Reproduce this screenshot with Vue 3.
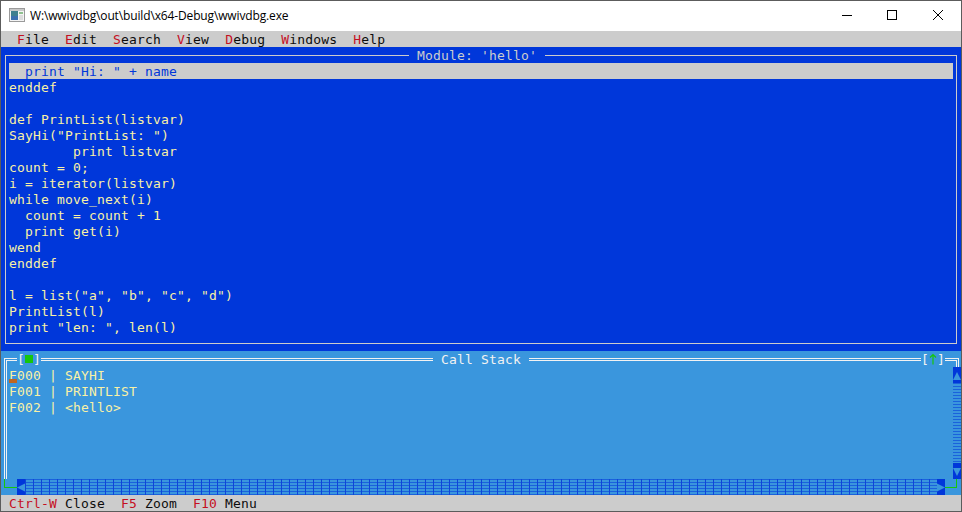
<script setup>
const menus = ['File', 'Edit', 'Search', 'View', 'Debug', 'Windows', 'Help']
const selected = '  print "Hi: " + name'
const code = [
  'enddef',
  '',
  'def PrintList(listvar)',
  'SayHi("PrintList: ")',
  '        print listvar',
  'count = 0;',
  'i = iterator(listvar)',
  'while move_next(i)',
  '  count = count + 1',
  '  print get(i)',
  'wend',
  'enddef',
  '',
  'l = list("a", "b", "c", "d")',
  'PrintList(l)',
  'print "len: ", len(l)'
]
const stack = ['F000 | SAYHI', 'F001 | PRINTLIST', 'F002 | <hello>']
const status = [
  ['Ctrl-W', 'Close'],
  ['F5', 'Zoom'],
  ['F10', 'Menu']
]
</script>

<template>
  <div class="window">
    <header class="titlebar">
      <svg class="appicon" width="16" height="16" viewBox="0 0 16 16">
        <rect x="0.5" y="1.5" width="15" height="13" fill="#f4f4f4" stroke="#9a9a9a" />
        <rect x="1" y="2" width="14" height="2" fill="#c8c8c8" />
        <rect x="2" y="4" width="7" height="9" fill="#3f7f8f" />
        <rect x="2" y="9" width="7" height="4" fill="#3c6fb0" />
        <rect x="10" y="5" width="4" height="2" fill="#8fc08f" />
        <rect x="10" y="8" width="4" height="5" fill="#dcdcdc" />
      </svg>
      <span class="path">W:\wwivdbg\out\build\x64-Debug\wwivdbg.exe</span>
      <div class="controls">
        <svg class="ctl" width="46" height="30" viewBox="0 0 46 30"><path d="M19 14.5h10" stroke="#000" fill="none" /></svg>
        <svg class="ctl" width="46" height="30" viewBox="0 0 46 30"><rect x="18.5" y="9.5" width="9" height="9" stroke="#000" fill="none" /></svg>
        <svg class="ctl" width="46" height="30" viewBox="0 0 46 30"><path d="M18 9l10 10M28 9l-10 10" stroke="#000" fill="none" /></svg>
      </div>
    </header>

    <nav class="menubar term">
      <span v-for="m in menus" :key="m" class="menu"><span class="hot">{{ m[0] }}</span>{{ m.slice(1) }}</span>
    </nav>

    <section class="codepane term">
      <div class="codeframe">
        <span class="codetitle">Module: 'hello'</span>
        <div class="line selected">{{ selected }}</div>
        <div v-for="(l, i) in code" :key="i" class="line">{{ l }}</div>
      </div>
    </section>

    <section class="stackpane term">
      <div class="stackframe">
        <span class="tag tag-left"><span class="cell">[</span><span class="cell"><i class="square"></i></span><span class="cell">]</span></span>
        <span class="stacktitle">Call Stack</span>
        <span class="tag tag-right">
          <span class="cell">[</span>
          <svg class="cell" width="8" height="16" viewBox="0 0 8 16"><path d="M4 3.5V13.5M1 6.5L4 3.5L7 6.5" stroke="#16c60c" stroke-width="1.2" fill="none" /></svg>
          <span class="cell">]</span>
        </span>
        <div v-for="s in stack" :key="s" class="line">{{ s }}</div>
        <span class="cursor"></span>
      </div>
      <div class="vbar">
        <span class="arrow"><svg width="8" height="16" viewBox="0 0 8 16"><path d="M4 5L8 13H0Z" fill="#3a96dd" /></svg></span>
        <span class="track"></span>
        <span class="arrow"><svg width="8" height="16" viewBox="0 0 8 16"><path d="M0 5H8L4 13Z" fill="#3a96dd" /></svg></span>
      </div>
      <div class="hbar">
        <span class="arrow"><svg width="8" height="16" viewBox="0 0 8 16"><path d="M0 8.5L8 4.5V12.5Z" fill="#3a96dd" /></svg></span>
        <span class="track"></span>
        <span class="arrow"><svg width="8" height="16" viewBox="0 0 8 16"><path d="M0 4.5L8 8.5L0 12.5Z" fill="#3a96dd" /></svg></span>
      </div>
      <span class="corner corner-left"></span>
      <span class="corner corner-right"></span>
    </section>

    <footer class="statusbar term">
      <span v-for="s in status" :key="s[0]" class="stat"><span class="hot">{{ s[0] }}</span>{{ ' ' + s[1] }}</span>
    </footer>
  </div>
</template>

<style>
html, body { margin: 0; padding: 0; background: #fff; overflow: hidden; }
</style>

<style scoped>
.window {
  width: 962px;
  height: 512px;
  box-sizing: border-box;
  border: 1px solid #5c5c5c;
  display: flex;
  flex-direction: column;
  overflow: hidden;
  background: #fff;
}
.titlebar {
  height: 30px;
  flex: none;
  display: flex;
  align-items: center;
  background: #fff;
  padding-left: 8px;
}
.appicon { flex: none; margin-top: -2px; }
.path {
  margin-left: 5px;
  margin-bottom: 2px;
  font-family: "Open Sans", sans-serif;
  font-size: 12px;
  letter-spacing: -0.14px;
  color: #000;
  white-space: nowrap;
}
.controls { margin-left: auto; display: flex; }
.ctl { display: block; }
.term {
  font-family: "DejaVu Sans Mono", monospace;
  font-size: 13px;
  letter-spacing: 0.174px;
  line-height: 18px;
  white-space: pre;
  font-kerning: none;
}
.menubar {
  height: 16px;
  flex: none;
  display: flex;
  background: #cccccc;
  color: #0c0c0c;
  padding-left: 8px;
}
.menu { padding: 0 8px; height: 16px; }
.hot { color: #c50f1f; }
.codepane {
  height: 304px;
  flex: none;
  box-sizing: border-box;
  background: #0037da;
  padding: 8px 4px 7px;
  color: #f9f1a5;
}
.codeframe {
  position: relative;
  height: 289px;
  box-sizing: border-box;
  border: 1px solid #cccccc;
  padding: 7px 3px 0;
}
.line { height: 16px; }
.selected { background: #cccccc; color: #0037da; }
.codetitle {
  position: absolute;
  left: 403px;
  top: -9px;
  height: 16px;
  padding: 0 8px;
  background: #0037da;
  color: #cccccc;
}
.stackpane {
  position: relative;
  height: 144px;
  flex: none;
  box-sizing: border-box;
  background: #3a96dd;
  color: #f9f1a5;
  padding: 7px 2px 0 3px;
}
.stackframe {
  position: relative;
  height: 121px;
  box-sizing: border-box;
  border: 3px double #f2f2f2;
  border-bottom: none;
  padding: 6px 0 0 2px;
}
.stacktitle, .tag {
  position: absolute;
  top: -10px;
  height: 16px;
  background: #3a96dd;
  color: #f2f2f2;
}
.stacktitle { left: 426px; padding: 0 8px; }
.tag { display: flex; }
.tag-left { left: 10px; }
.tag-right { left: 914px; }
.cell {
  display: flex;
  justify-content: center;
  flex: none;
  width: 8px;
  height: 16px;
}
.square {
  display: block;
  width: 8px;
  height: 8px;
  margin-top: 4px;
  background: #16c60c;
}
.cursor {
  position: absolute;
  left: 2px;
  top: 18px;
  width: 8px;
  height: 4px;
  background: #c0661f;
}
.arrow {
  display: block;
  flex: none;
  background: #0037da;
  width: 8px;
  height: 16px;
}
.arrow svg { display: block; }
.track { display: block; flex: 1; }
.vbar {
  position: absolute;
  right: 0;
  top: 16px;
  width: 8px;
  height: 112px;
  display: flex;
  flex-direction: column;
}
.vbar .track {
  background: repeating-linear-gradient(to bottom, #1a62dc 0 1px, #3a96dd 1px 3px);
}
.hbar {
  position: absolute;
  left: 16px;
  top: 128px;
  width: 928px;
  height: 16px;
  display: flex;
}
.hbar .track {
  background:
    repeating-linear-gradient(to right, #0f45d8 0 1px, transparent 1px 8px),
    repeating-linear-gradient(to bottom, #1a62dc 0 1px, #3a96dd 1px 3px);
}
.corner {
  position: absolute;
  top: 128px;
  height: 9px;
  box-sizing: border-box;
  border-bottom: 1px solid #16c60c;
}
.corner-left {
  left: 3px;
  width: 13px;
  border-left: 1px solid #16c60c;
}
.corner-right {
  left: 944px;
  width: 12px;
  border-right: 1px solid #16c60c;
}
.statusbar {
  height: 16px;
  flex: none;
  display: flex;
  background: #cccccc;
  color: #0c0c0c;
  padding-left: 8px;
}
.stat { margin-right: 16px; height: 16px; }
</style>
